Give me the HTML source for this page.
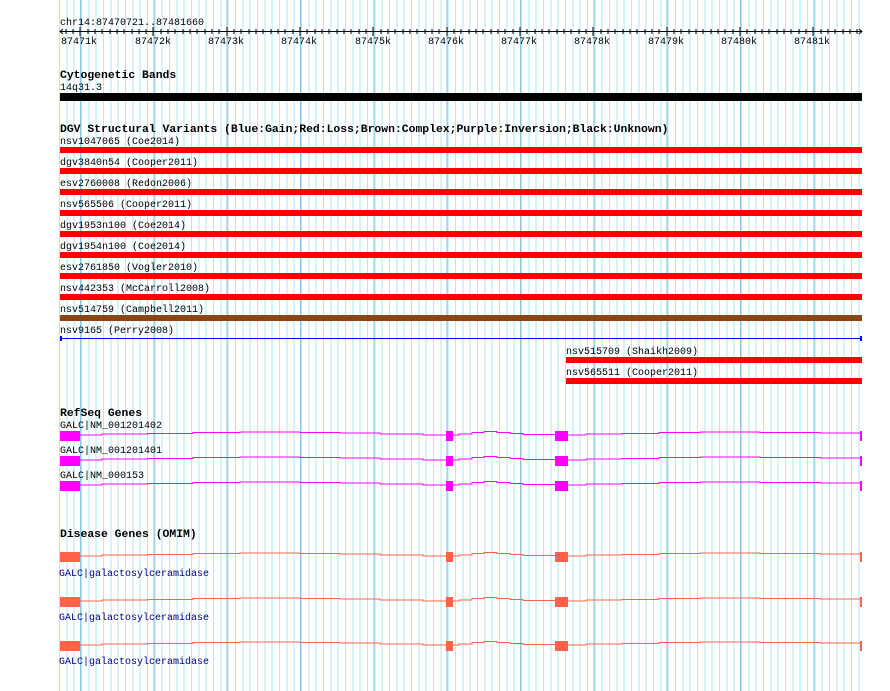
<!DOCTYPE html>
<html><head><meta charset="utf-8"><style>
html,body{margin:0;padding:0;background:#fff;}
#w{position:relative;width:890px;height:691px;overflow:hidden;
background:
repeating-linear-gradient(90deg,#88c6ea 0 1px,transparent 1px 73.33px) 80px 0/782px 100% no-repeat,
repeating-linear-gradient(90deg,#aeeaf0 0 1px,transparent 1px 7.333px) 59px 0/804px 100% no-repeat;}
svg{position:absolute;left:0;top:0;}
text{font-family:"Liberation Mono",monospace;font-size:10px;fill:#000;}
.b{font-weight:bold;font-size:11.4px;}
.d{fill:#000080;}
</style></head><body><div id="w">
<svg width="890" height="691" xmlns="http://www.w3.org/2000/svg">
<defs>
<path id="ln" d="M80 4H102V3H148V2.5H193V1.5H240V1H300V1.5H340V2H380V3H423V4H446 M453 4H459V3H472V1.5H484V0.5H497V1.5H510V2.5H523V3.5H555 M568 4H586V3H622V2.5H659V1.5H700V1H760V1.5H820V2H860" fill="none" stroke-width="1"/>
</defs>
<text x="60" y="25">chr14:87470721..87481660</text>
<line x1="60" y1="31.5" x2="862" y2="31.5" stroke="#000"/>
<path d="M63 29L60 31.5L63 34M859 29L862 31.5L859 34" fill="none" stroke="#000"/>
<g stroke="#000">
<path d="M66 29v5M73 29v5M80 27v9M88 29v5M95 29v5M102 29v5M110 29v5M117 29v5M124 29v5M132 29v5M139 29v5M146 29v5M153 27v9M161 29v5M168 29v5M175 29v5M183 29v5M190 29v5M197 29v5M205 29v5M212 29v5M219 29v5M227 27v9M234 29v5M241 29v5M249 29v5M256 29v5M263 29v5M271 29v5M278 29v5M285 29v5M293 29v5M300 27v9M307 29v5M315 29v5M322 29v5M329 29v5M337 29v5M344 29v5M351 29v5M359 29v5M366 29v5M373 27v9M381 29v5M388 29v5M395 29v5M403 29v5M410 29v5M417 29v5M425 29v5M432 29v5M439 29v5M447 27v9M454 29v5M461 29v5M469 29v5M476 29v5M483 29v5M491 29v5M498 29v5M505 29v5M513 29v5M520 27v9M527 29v5M535 29v5M542 29v5M549 29v5M557 29v5M564 29v5M571 29v5M579 29v5M586 29v5M593 27v9M601 29v5M608 29v5M615 29v5M623 29v5M630 29v5M637 29v5M645 29v5M652 29v5M659 29v5M667 27v9M674 29v5M681 29v5M689 29v5M696 29v5M703 29v5M711 29v5M718 29v5M725 29v5M733 29v5M740 27v9M747 29v5M755 29v5M762 29v5M769 29v5M777 29v5M784 29v5M791 29v5M799 29v5M806 29v5M813 27v9M821 29v5M828 29v5M835 29v5M843 29v5M850 29v5M857 29v5"/>
</g>
<g>
<text x="61" y="44">87471k</text><text x="135" y="44">87472k</text><text x="208" y="44">87473k</text><text x="281" y="44">87474k</text><text x="355" y="44">87475k</text><text x="428" y="44">87476k</text><text x="501" y="44">87477k</text><text x="574" y="44">87478k</text><text x="648" y="44">87479k</text><text x="721" y="44">87480k</text><text x="794" y="44">87481k</text>
</g>
<text class="b" x="60" y="78">Cytogenetic Bands</text>
<text x="60" y="90">14q31.3</text>
<rect x="60" y="93" width="802" height="8" fill="#000"/>
<text class="b" x="60" y="132">DGV Structural Variants (Blue:Gain;Red:Loss;Brown:Complex;Purple:Inversion;Black:Unknown)</text>
<text x="60" y="144">nsv1047065 (Coe2014)</text><rect x="60" y="147" width="802" height="6" fill="#f00"/>
<text x="60" y="165">dgv3840n54 (Cooper2011)</text><rect x="60" y="168" width="802" height="6" fill="#f00"/>
<text x="60" y="186">esv2760008 (Redon2006)</text><rect x="60" y="189" width="802" height="6" fill="#f00"/>
<text x="60" y="207">nsv565506 (Cooper2011)</text><rect x="60" y="210" width="802" height="6" fill="#f00"/>
<text x="60" y="228">dgv1953n100 (Coe2014)</text><rect x="60" y="231" width="802" height="6" fill="#f00"/>
<text x="60" y="249">dgv1954n100 (Coe2014)</text><rect x="60" y="252" width="802" height="6" fill="#f00"/>
<text x="60" y="270">esv2761850 (Vogler2010)</text><rect x="60" y="273" width="802" height="6" fill="#f00"/>
<text x="60" y="291">nsv442353 (McCarroll2008)</text><rect x="60" y="294" width="802" height="6" fill="#f00"/>
<text x="60" y="312">nsv514759 (Campbell2011)</text><rect x="60" y="315" width="802" height="6" fill="#8b4513"/>
<text x="60" y="333">nsv9165 (Perry2008)</text>
<line x1="60" y1="338.5" x2="862" y2="338.5" stroke="#00f"/><rect x="60" y="336" width="2" height="5" fill="#00f"/><rect x="860" y="336" width="2" height="5" fill="#00f"/>
<text x="566" y="354">nsv515709 (Shaikh2009)</text><rect x="566" y="357" width="296" height="6" fill="#f00"/>
<text x="566" y="375">nsv565511 (Cooper2011)</text><rect x="566" y="378" width="296" height="6" fill="#f00"/>
<text class="b" x="60" y="416">RefSeq Genes</text>
<g fill="#f0f">
<text x="60" y="428">GALC|NM_001201402</text>
<text x="60" y="453">GALC|NM_001201401</text>
<text x="60" y="478">GALC|NM_000153</text>
</g>
<g fill="#f0f" stroke="#f0f">
<g transform="translate(0,431)"><use href="#ln"/><rect x="60" y="0" width="20" height="10" stroke="none"/><rect x="446" y="0" width="7" height="10" stroke="none"/><rect x="555" y="0" width="13" height="10" stroke="none"/><rect x="860" y="0" width="2" height="10" stroke="none"/></g>
<g transform="translate(0,456)"><use href="#ln"/><rect x="60" y="0" width="20" height="10" stroke="none"/><rect x="446" y="0" width="7" height="10" stroke="none"/><rect x="555" y="0" width="13" height="10" stroke="none"/><rect x="860" y="0" width="2" height="10" stroke="none"/></g>
<g transform="translate(0,481)"><use href="#ln"/><rect x="60" y="0" width="20" height="10" stroke="none"/><rect x="446" y="0" width="7" height="10" stroke="none"/><rect x="555" y="0" width="13" height="10" stroke="none"/><rect x="860" y="0" width="2" height="10" stroke="none"/></g>
</g>
<text class="b" x="60" y="537">Disease Genes (OMIM)</text>
<g fill="#ff6347" stroke="#ff6347">
<g transform="translate(0,552)"><use href="#ln"/><rect x="60" y="0" width="20" height="10" stroke="none"/><rect x="446" y="0" width="7" height="10" stroke="none"/><rect x="555" y="0" width="13" height="10" stroke="none"/><rect x="860" y="0" width="2" height="10" stroke="none"/></g>
<g transform="translate(0,597)"><use href="#ln"/><rect x="60" y="0" width="20" height="10" stroke="none"/><rect x="446" y="0" width="7" height="10" stroke="none"/><rect x="555" y="0" width="13" height="10" stroke="none"/><rect x="860" y="0" width="2" height="10" stroke="none"/></g>
<g transform="translate(0,641)"><use href="#ln"/><rect x="60" y="0" width="20" height="10" stroke="none"/><rect x="446" y="0" width="7" height="10" stroke="none"/><rect x="555" y="0" width="13" height="10" stroke="none"/><rect x="860" y="0" width="2" height="10" stroke="none"/></g>
</g>
<text class="d" x="59" y="576">GALC|galactosylceramidase</text>
<text class="d" x="59" y="620">GALC|galactosylceramidase</text>
<text class="d" x="59" y="664">GALC|galactosylceramidase</text>
</svg>
</div></body></html>
